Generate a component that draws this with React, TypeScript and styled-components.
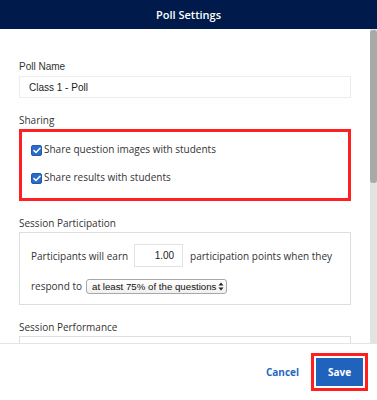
import React from 'react';
import styled, { createGlobalStyle } from 'styled-components';

const GlobalStyle = createGlobalStyle`
  html, body {
    margin: 0;
    padding: 0;
  }
  body {
    font-family: "Open Sans", "Liberation Sans", Arial, sans-serif;
    color: #333;
    background: #fff;
  }
  * {
    box-sizing: border-box;
  }
`;

const Modal = styled.div`
  width: 377px;
  height: 400px;
  display: flex;
  flex-direction: column;
  background: #fff;
  overflow: hidden;
`;

const Header = styled.header`
  flex: none;
  height: 29px;
  background: #001b4b;
  color: #fff;
  display: flex;
  align-items: center;
  justify-content: center;
  font-family: "Open Sans", sans-serif;
  font-weight: 600;
  font-size: 11px;
`;

const Main = styled.div`
  flex: 1;
  min-height: 0;
  display: flex;
`;

const Body = styled.div`
  flex: 1;
  overflow: hidden;
  padding: 31px 19px 0;
`;

const ScrollTrack = styled.div`
  flex: none;
  width: 7px;
  background: #e3e3e3;
`;

const ScrollThumb = styled.div`
  height: 153px;
  margin-top: 1px;
  background: #a9a9a9;
  border-radius: 3px;
`;

const Section = styled.section`
  margin-bottom: 15px;
`;

const Label = styled.div<{ $arial?: boolean }>`
  font-family: ${(p) =>
    p.$arial ? '"Liberation Sans", Arial, sans-serif' : '"Open Sans", sans-serif'};
  font-size: 10px;
  line-height: 14px;
  color: #333;
  margin-bottom: 2px;
`;

const TextInput = styled.input`
  display: block;
  width: 100%;
  height: 22px;
  border: 1px solid #ececec;
  padding: 0 9px;
  font-family: "Liberation Sans", Arial, sans-serif;
  font-size: 10px;
  color: #222;
  outline: none;
`;

const SharingBox = styled.div`
  border: 3px solid #ff2121;
  padding: 10px 9px 14px;
  display: flex;
  flex-direction: column;
  gap: 14px;
`;

const CheckRow = styled.label`
  display: flex;
  align-items: flex-start;
  gap: 2px;
  font-size: 10px;
  line-height: 14px;
  color: #333;
`;

const CheckBox = styled.span`
  width: 11px;
  height: 11px;
  margin-top: 3px;
  border-radius: 2px;
  background: #2b6cc9;
  border: 1px solid #1f5bb0;
  display: flex;
  align-items: center;
  justify-content: center;
  flex: none;
`;

const Panel = styled.div<{ $empty?: boolean }>`
  border: 1px solid #dedede;
  padding: 11px 11px;
  display: flex;
  flex-direction: column;
  gap: 12px;
  min-height: ${(p) => (p.$empty ? '73px' : 'auto')};
`;

const PanelRow = styled.div<{ $h: number }>`
  height: ${(p) => p.$h}px;
  display: flex;
  align-items: center;
  font-size: 10px;
  color: #333;
  white-space: nowrap;
`;

const NumberInput = styled.input`
  width: 49px;
  height: 23px;
  margin: 0 7px 0 6px;
  border: 1px solid #e2e2e2;
  padding: 0 8px;
  text-align: right;
  font-family: "Liberation Sans", Arial, sans-serif;
  font-size: 10px;
  color: #222;
  outline: none;
`;

const SelectBox = styled.div`
  margin-left: 4px;
  height: 15px;
  border: 1px solid #a8a8a8;
  border-radius: 3px;
  background: linear-gradient(#ffffff, #f0f0f0);
  padding: 0 2px 0 5px;
  display: flex;
  align-items: center;
  gap: 2px;
  font-family: "Liberation Sans", Arial, sans-serif;
  font-size: 9.7px;
  color: #111;
`;

const Footer = styled.footer`
  flex: none;
  height: 57px;
  border-top: 1px solid #e4e4e4;
  display: flex;
  align-items: center;
  justify-content: flex-end;
  gap: 17px;
  padding-right: 14px;
`;

const CancelButton = styled.button`
  background: none;
  border: none;
  padding: 0;
  color: #2767c1;
  font-family: "Open Sans", sans-serif;
  font-weight: 700;
  font-size: 10px;
  cursor: pointer;
`;

const SaveButton = styled.button`
  width: 47px;
  height: 28px;
  background: #1f63bd;
  color: #fff;
  border: none;
  border-radius: 0;
  font-family: "Open Sans", sans-serif;
  font-weight: 700;
  font-size: 10px;
  outline: 3px solid #ff1f1f;
  outline-offset: 2px;
  cursor: pointer;
`;

const Check = () => (
  <CheckBox>
    <svg width="8" height="7" viewBox="0 0 8 7">
      <path d="M1 3.6 L3 5.5 L7 1.2" fill="none" stroke="#fff" strokeWidth="1.5" strokeLinecap="round" strokeLinejoin="round" />
    </svg>
  </CheckBox>
);

const Arrows = () => (
  <svg width="6" height="9" viewBox="0 0 6 9">
    <path d="M3 0.5 L5.5 3.5 H0.5 Z" fill="#222" />
    <path d="M3 8.5 L5.5 5.5 H0.5 Z" fill="#222" />
  </svg>
);

export default function App() {
  return (
    <>
      <GlobalStyle />
      <Modal>
        <Header>Poll Settings</Header>
        <Main>
          <Body>
            <Section>
              <Label $arial>Poll Name</Label>
              <TextInput defaultValue="Class 1 - Poll" />
            </Section>

            <Section>
              <Label>Sharing</Label>
              <SharingBox>
                <CheckRow>
                  <Check />
                  Share question images with students
                </CheckRow>
                <CheckRow>
                  <Check />
                  Share results with students
                </CheckRow>
              </SharingBox>
            </Section>

            <Section>
              <Label>Session Participation</Label>
              <Panel>
                <PanelRow $h={23}>
                  Participants will earn
                  <NumberInput defaultValue="1.00" />
                  participation points when they
                </PanelRow>
                <PanelRow $h={14}>
                  respond to
                  <SelectBox>
                    <span>at least 75% of the questions</span>
                    <Arrows />
                  </SelectBox>
                </PanelRow>
              </Panel>
            </Section>

            <Section>
              <Label>Session Performance</Label>
              <Panel $empty />
            </Section>
          </Body>
          <ScrollTrack>
            <ScrollThumb />
          </ScrollTrack>
        </Main>
        <Footer>
          <CancelButton>Cancel</CancelButton>
          <SaveButton>Save</SaveButton>
        </Footer>
      </Modal>
    </>
  );
}
